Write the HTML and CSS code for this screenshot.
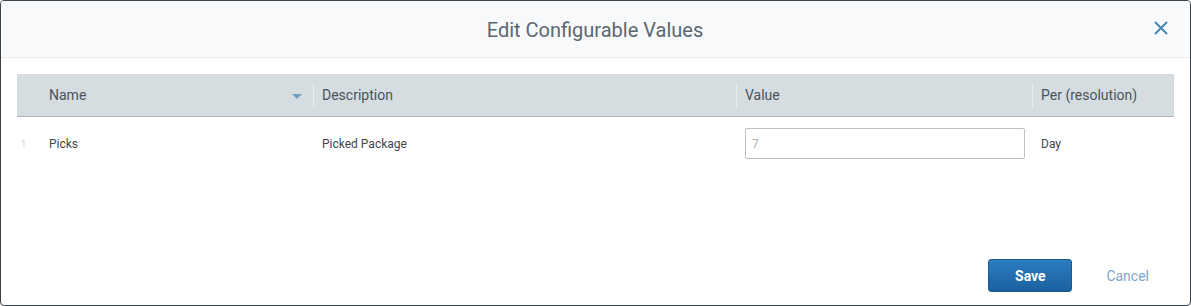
FILE: index.html
```html
<!DOCTYPE html>
<html>
<head>
<meta charset="utf-8">
<link rel="stylesheet" href="styles.css">
</head>
<body>
<div class="dialog">
  <div class="dlg-header">
    <div class="title">Edit Configurable Values</div>
    <button class="close" aria-label="Close">
      <svg width="14" height="14" viewBox="0 0 14 14"><path d="M1 1 L13 13 M13 1 L1 13" stroke="#4a86b4" stroke-width="2" fill="none"/></svg>
    </button>
  </div>
  <div class="content">
    <div class="grid">
      <div class="thead">
        <div class="th c1"><span class="lbl">Name</span><span class="sort"></span></div>
        <div class="th c2"><span class="div"></span><span class="lbl">Description</span></div>
        <div class="th c3"><span class="div"></span><span class="lbl">Value</span></div>
        <div class="th c4"><span class="div"></span><span class="lbl">Per (resolution)</span></div>
      </div>
      <div class="row">
        <div class="td c1"><span class="num">1</span><span>Picks</span></div>
        <div class="td c2"><span>Picked Package</span></div>
        <div class="td c3"><div class="input">7</div></div>
        <div class="td c4"><span>Day</span></div>
      </div>
    </div>
  </div>
  <div class="footer">
    <button class="save">Save</button>
    <button class="cancel">Cancel</button>
  </div>
</div>
</body>
</html>
```
FILE: styles.css
```css
html, body { margin: 0; padding: 0; background: #fff; }
body { font-family: Roboto, "Liberation Sans", sans-serif; }
.dialog {
  box-sizing: border-box;
  width: 1191px;
  height: 306px;
  border: 1px solid #3b4248;
  border-radius: 4px;
  background: #fff;
  display: flex;
  flex-direction: column;
  overflow: hidden;
}
.dlg-header {
  height: 56px;
  background: #f8f9fb;
  border-bottom: 1px solid #e9edf0;
  display: flex;
  align-items: center;
  justify-content: center;
  position: relative;
  flex-shrink: 0;
}
.title {
  font-size: 20px;
  color: #5b6770;
  padding-top: 1px;
  margin-left: -1px;
}
.close {
  position: absolute;
  right: 22px;
  top: 20px;
  border: 0;
  background: none;
  padding: 0;
  width: 14px;
  height: 14px;
  display: flex;
}
.content {
  padding: 16px 16px 0 16px;
}
.grid { width: 1157px; }
.thead {
  display: flex;
  height: 42px;
  background: #d6dde1;
  border-bottom: 1px solid #a9b3ba;
}
.c1 { width: 296px; }
.c2 { width: 423px; }
.c3 { width: 296px; }
.c4 { flex: 1; }
.th, .td { box-sizing: border-box; flex-shrink: 0; }
.c4 { flex-shrink: 1; }
.th {
  display: flex;
  align-items: center;
  position: relative;
  font-size: 14px;
  color: #4a5359;
}
.th.c1 .lbl { margin-left: 32px; flex: 1; }
.th .lbl { margin-left: 9px; }
.th .div {
  position: absolute;
  left: 0;
  top: 9px;
  bottom: 8px;
  width: 1px;
  background: #e8ecee;
}
.sort {
  width: 0; height: 0;
  border-left: 5px solid transparent;
  border-right: 5px solid transparent;
  border-top: 5px solid #6f9fc4;
  margin-right: 11px;
  margin-top: 3px;
}
.row {
  display: flex;
  height: 53px;
  font-size: 12px;
  color: #3f464b;
}
.td {
  display: flex;
  align-items: center;
}
.num {
  font-size: 9px;
  color: #c9ced2;
  width: 32px;
  padding-left: 4px;
  box-sizing: border-box;
}
.td.c2, .td.c3, .td.c4 { padding-left: 9px; }
.input {
  box-sizing: border-box;
  width: 280px;
  height: 31px;
  border: 1px solid #b8c1c7;
  border-radius: 2px;
  padding-left: 6px;
  font-size: 12px;
  color: #a9b2b8;
  display: flex;
  align-items: center;
}
.footer {
  margin-top: auto;
  display: flex;
  justify-content: flex-end;
  align-items: center;
  padding: 0 41px 13px 0;
  gap: 34px;
}
.save {
  width: 84px;
  height: 33px;
  border: 1px solid #195a93;
  border-radius: 3px;
  background: linear-gradient(#2c7cc1, #1b619f);
  color: #fff;
  font-family: Roboto, "Liberation Sans", sans-serif;
  font-weight: 700;
  font-size: 14px;
  padding: 0;
}
.cancel {
  border: 0;
  background: none;
  padding: 0;
  font-family: Roboto, "Liberation Sans", sans-serif;
  font-size: 14px;
  color: #7ea6c8;
}
```
